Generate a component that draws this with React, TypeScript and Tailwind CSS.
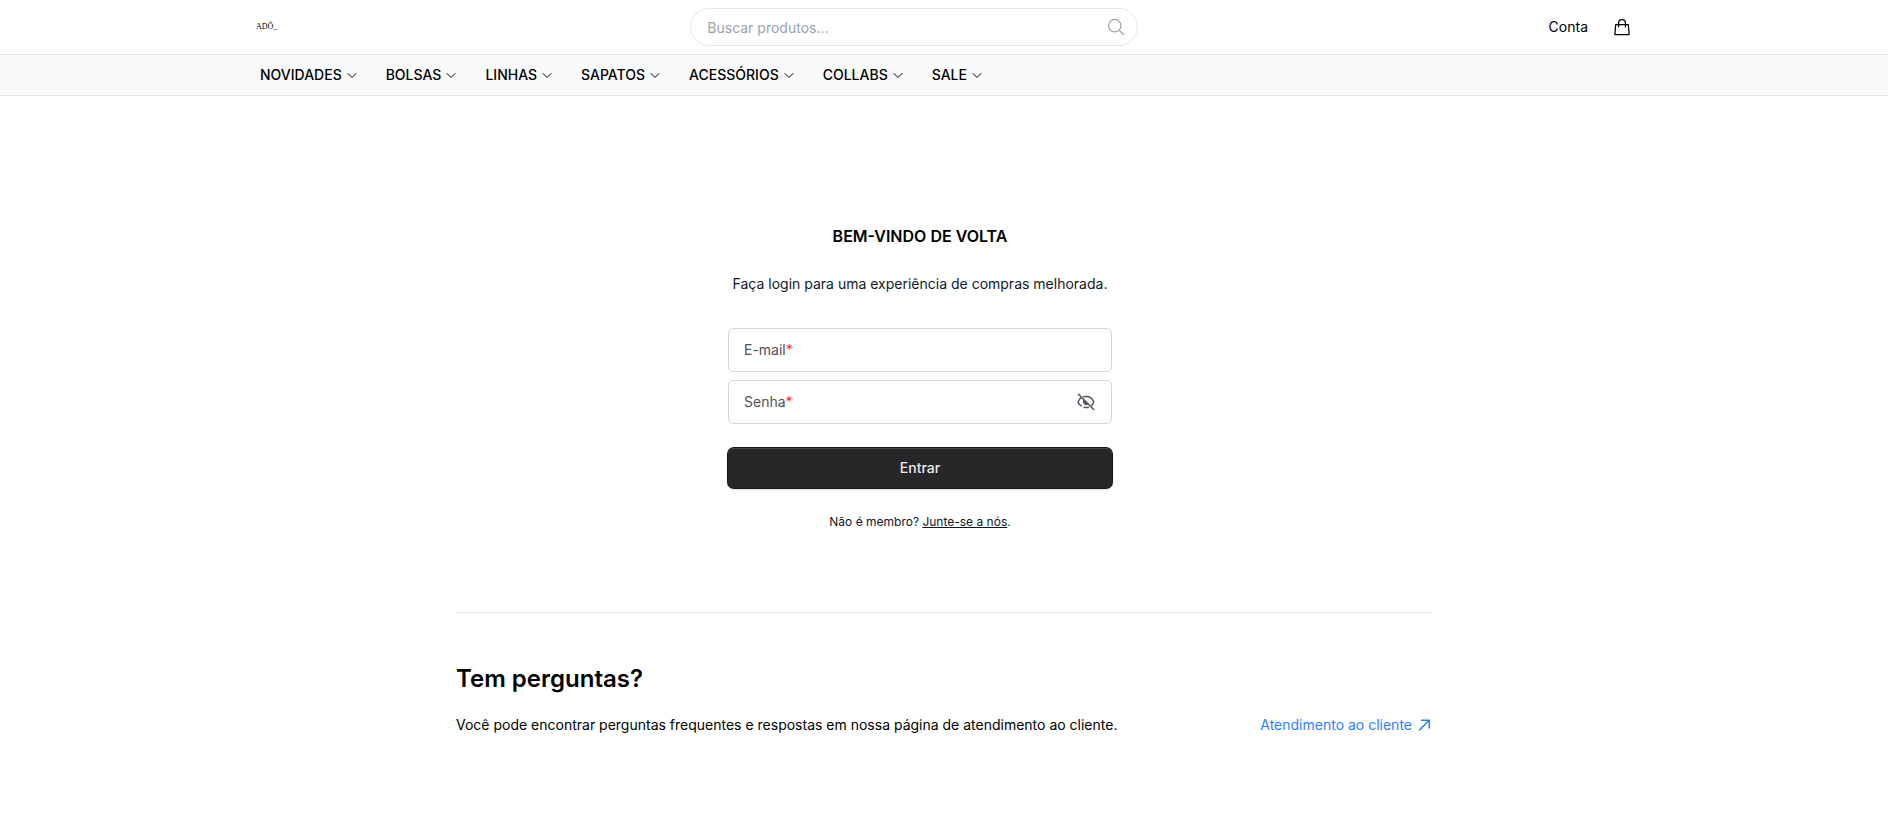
import React, { useState } from 'react';

const CATEGORIES = ['NOVIDADES', 'BOLSAS', 'LINHAS', 'SAPATOS', 'ACESSÓRIOS', 'COLLABS', 'SALE'];

const ChevronIcon = () => (
  <svg className="h-3 w-3" viewBox="0 0 12 12" fill="none" stroke="currentColor" aria-hidden="true">
    <path d="M2 4.5 6 8.5 10 4.5" strokeWidth="1" strokeLinecap="round" strokeLinejoin="round" />
  </svg>
);

const SearchIcon = () => (
  <svg className="h-5 w-5" viewBox="0 0 24 24" fill="none" stroke="currentColor" strokeWidth="1.5" aria-hidden="true">
    <path
      strokeLinecap="round"
      strokeLinejoin="round"
      d="m21 21-5.197-5.197m0 0A7.5 7.5 0 1 0 5.196 5.196a7.5 7.5 0 0 0 10.607 10.607Z"
    />
  </svg>
);

const BagIcon = () => (
  <svg className="h-5 w-5" viewBox="0 0 20 20" fill="none" stroke="currentColor" strokeWidth="1.25" aria-hidden="true">
    <path d="M3.7 7.5h12.6l.8 10H2.9z" strokeLinejoin="round" />
    <path d="M6.6 9.8V6a3.4 3.4 0 0 1 6.8 0v3.8" strokeLinecap="round" />
  </svg>
);

const EyeSlashIcon = () => (
  <svg className="h-5 w-5" viewBox="0 0 20 20" fill="none" stroke="currentColor" strokeWidth="1.5" aria-hidden="true">
    <path
      strokeLinecap="round"
      strokeLinejoin="round"
      d="M5.2 13.9C3.7 13 2.8 11.8 2.4 10.9a1.9 1.9 0 0 1 0-1.6C3.2 7.4 4.4 6.3 5.4 5.7M8 4.7c.6-.2 1.3-.2 2-.2 4.2 0 6.600 2.500 7.500 4.700.2.500.2 1.100 0 1.600-.3.800-.9 1.600-1.700 2.400M12.400 15.200c-.7.200-1.500.300-2.400.300-.7 0-1.300-.1-1.900-.2"
    />
    <path d="M7.900 7.900a3 3 0 0 0 4.200 4.200z" fill="currentColor" strokeWidth="1" strokeLinejoin="round" />
    <path d="m2.500 2.300 15.200 15.200" strokeLinecap="round" />
  </svg>
);

const ArrowUpRightIcon = () => (
  <svg className="h-4 w-4" viewBox="0 0 16 16" fill="none" stroke="currentColor" strokeWidth="1.5" aria-hidden="true">
    <path d="M3.500 13 13.200 3.300M5.500 3.200h7.800V11" strokeLinecap="round" strokeLinejoin="round" />
  </svg>
);

interface FieldProps {
  id: string;
  label: string;
  type: string;
  value: string;
  onChange: (value: string) => void;
  children?: React.ReactNode;
}

const Field: React.FC<FieldProps> = ({ id, label, type, value, onChange, children }) => (
  <div className="relative">
    <input
      id={id}
      name={id}
      type={type}
      value={value}
      required
      onChange={(e) => onChange(e.target.value)}
      className="block h-11 w-full rounded-md border border-gray-300 bg-white px-4 text-sm text-black outline-none focus:border-blue-500"
    />
    <label
      htmlFor={id}
      className={`pointer-events-none absolute inset-y-0 left-4 items-center text-sm text-zinc-600 ${value ? 'hidden' : 'flex'}`}
    >
      {label}
      <span className="text-rose-500">*</span>
    </label>
    {children}
  </div>
);

const Header = () => (
  <header>
    <div className="border-b border-gray-200 bg-white">
      <div className="mx-auto flex max-w-[1440px] items-center justify-between px-8 py-2">
        <a href="#inicio" className="w-6 whitespace-nowrap font-['Liberation_Serif',serif] text-[8px] leading-4">
          ADÔ_
        </a>
        <form role="search" onSubmit={(e) => e.preventDefault()} className="relative w-full max-w-md">
          <input
            type="search"
            aria-label="Buscar produtos"
            placeholder="Buscar produtos..."
            className="block h-[38px] w-full rounded-full border border-gray-200 bg-white pr-10 pl-4 text-sm outline-none placeholder:text-gray-400"
          />
          <button type="submit" aria-label="Buscar" className="absolute inset-y-0 right-3 flex items-center text-gray-400">
            <SearchIcon />
          </button>
        </form>
        <div className="flex items-center gap-6 text-sm">
          <a href="#conta">Conta</a>
          <button type="button" aria-label="Sacola">
            <BagIcon />
          </button>
        </div>
      </div>
    </div>
    <nav className="border-b border-gray-200 bg-gray-50">
      <ul className="mx-auto flex h-10 max-w-[1440px] items-center gap-7 px-9">
        {CATEGORIES.map((category) => (
          <li key={category}>
            <button type="button" className="flex items-center gap-1 text-sm font-medium">
              {category}
              <ChevronIcon />
            </button>
          </li>
        ))}
      </ul>
    </nav>
  </header>
);

const LoginForm = () => {
  const [email, setEmail] = useState('');
  const [password, setPassword] = useState('');
  const [showPassword, setShowPassword] = useState(false);

  return (
    <div className="mx-auto w-full max-w-96 text-center">
      <h1 className="text-base font-semibold">BEM-VINDO DE VOLTA</h1>
      <p className="mt-6 mb-8 text-sm leading-6 text-gray-900">Faça login para uma experiência de compras melhorada.</p>
      <form onSubmit={(e) => e.preventDefault()}>
        <div className="flex flex-col gap-2">
          <Field id="email" label="E-mail" type="email" value={email} onChange={setEmail} />
          <Field
            id="password"
            label="Senha"
            type={showPassword ? 'text' : 'password'}
            value={password}
            onChange={setPassword}
          >
            <button
              type="button"
              aria-label="Mostrar senha"
              onClick={() => setShowPassword(!showPassword)}
              className="absolute inset-y-0 right-4 flex items-center text-zinc-600"
            >
              <EyeSlashIcon />
            </button>
          </Field>
        </div>
        <button
          type="submit"
          className="mt-6 h-10 w-full rounded-md bg-zinc-800 text-sm font-medium text-white/90 shadow-[inset_0_1px_0_#47474a,0_0_0_1px_#18181b,0_1px_2px_1px_#00000022]"
        >
          Entrar
        </button>
      </form>
      <p className="mt-6 text-xs leading-5 text-gray-900">
        Não é membro?{' '}
        <a href="#cadastro" className="underline">
          Junte-se a nós
        </a>
        .
      </p>
    </div>
  );
};

const App: React.FC = () => (
  <div className="min-h-screen bg-white font-[Inter,sans-serif] text-black">
    <Header />
    <main className="mx-auto max-w-[1024px] px-6">
      <section className="pt-32 pr-12 pb-20">
        <LoginForm />
      </section>
      <section className="border-t border-gray-200 py-12">
        <h2 className="text-2xl leading-9 font-semibold">Tem perguntas?</h2>
        <div className="mt-4 flex items-center justify-between gap-8 text-sm leading-6">
          <p>Você pode encontrar perguntas frequentes e respostas em nossa página de atendimento ao cliente.</p>
          <a href="#atendimento" className="flex items-center gap-1 text-blue-500">
            Atendimento ao cliente
            <ArrowUpRightIcon />
          </a>
        </div>
      </section>
    </main>
  </div>
);

export default App;
